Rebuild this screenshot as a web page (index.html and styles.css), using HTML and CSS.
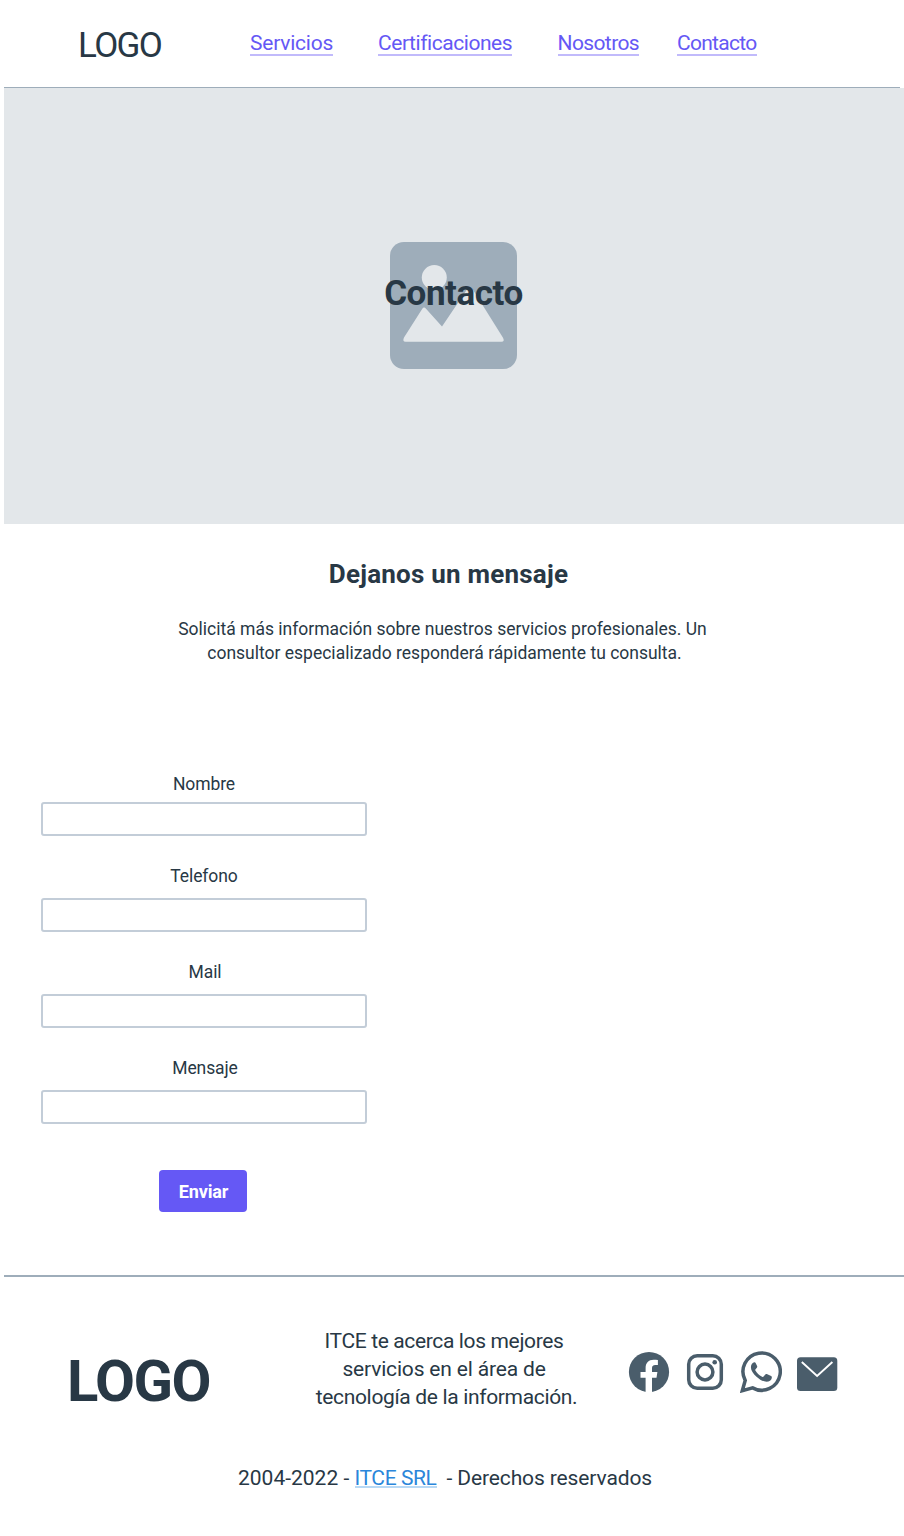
FILE: index.html
```html
<!DOCTYPE html>
<html lang="es">
<head>
<meta charset="utf-8">
<title>Contacto</title>
<link rel="stylesheet" href="styles.css">
</head>
<body>
<header class="header">
  <div class="logo">LOGO</div>
  <nav class="nav">
    <a class="nav-link servicios" href="#">Servicios</a>
    <a class="nav-link certificaciones" href="#">Certificaciones</a>
    <a class="nav-link nosotros" href="#">Nosotros</a>
    <a class="nav-link contacto" href="#">Contacto</a>
  </nav>
</header>
<main>
  <section class="hero">
    <svg class="placeholder" viewBox="0 0 127 127" aria-hidden="true">
      <rect width="127" height="127" rx="14" fill="#9eadba"/>
      <circle cx="44.3" cy="35.5" r="12.5" fill="#e3e7ea"/>
      <path d="M14 95.5 32.3 66.8Q34 64.4 36 66.8L52 84.5 76.8 47.8Q80 43.5 83 47.8L113 95.8Q115 99.7 111.5 99.7H15.5Q12.2 99.7 14 95.5Z" fill="#e3e7ea"/>
    </svg>
    <h1 class="hero-title">Contacto</h1>
  </section>
  <section class="intro">
    <h2 class="intro-title">Dejanos un mensaje</h2>
    <p class="intro-text"><span>Solicitá más información sobre nuestros servicios profesionales. Un</span> <span class="second">consultor especializado responderá rápidamente tu consulta.</span></p>
  </section>
  <form class="form">
    <label class="field first"><span>Nombre</span><input class="input" type="text"></label>
    <label class="field"><span>Telefono</span><input class="input" type="text"></label>
    <label class="field shifted"><span>Mail</span><input class="input" type="text"></label>
    <label class="field shifted"><span>Mensaje</span><input class="input" type="text"></label>
    <button class="submit" type="button">Enviar</button>
  </form>
</main>
<footer class="footer">
  <div class="footer-main">
    <div class="footer-logo">LOGO</div>
    <p class="about"><span class="line-a">ITCE te acerca los mejores</span> <span class="line-b">servicios en el área de</span> <span class="line-c">tecnología de la información.</span></p>
    <div class="social">
      <svg viewBox="-1 -1 42 42"><circle cx="20" cy="20" r="20.1" fill="#4a5d6b"/><path d="M16.6 41V25.7H11.5V20h5.1v-4c0-5.2 3-8.3 8-8.3 1.6 0 3 .15 4.3.4v5h-2.6c-2.4 0-3.3 1.3-3.3 3.1V20h5.4l-.9 5.7H23V41z" fill="#fff"/></svg>
      <svg viewBox="0 0 42 42" fill="none" stroke="#4a5d6b" stroke-width="3.5"><rect x="4.7" y="4.7" width="32.6" height="32.6" rx="8.5"/><circle cx="21" cy="21" r="7.9"/><circle cx="30.7" cy="11.2" r="2.3" fill="#4a5d6b" stroke="none"/></svg>
      <svg viewBox="0 0 42 42"><path d="M2.3 39.7 5.2 29.4A18.65 18.65 0 1 1 12.6 36.9Z" fill="none" stroke="#4a5d6b" stroke-width="3.5"/><path d="M14.3 11.2c-1.6.1-3.4 2.2-3.4 5 0 3.2 2.3 6.5 5.6 9.5 3.5 3.1 6.8 5 10 5 2.7 0 5-1.6 5.3-3.8.1-.9 0-1.4-.7-1.8l-4.3-2c-.6-.3-1.1-.2-1.5.4l-1.7 2.1c-.4.5-.9.5-1.5.2-3.1-1.5-5.3-3.6-6.7-6.2-.3-.6-.2-1 .2-1.4l1.4-1.8c.3-.4.3-.8.1-1.3l-1.6-3.3c-.2-.5-.6-.7-1.2-.6Z" fill="#4a5d6b"/></svg>
      <svg viewBox="0 0 42 42"><rect x="1" y="6.2" width="40.3" height="33.7" rx="3.5" fill="#4a5d6b"/><path d="m5.8 11 15.3 14 15.3-14" fill="none" stroke="#fff" stroke-width="1.9"/></svg>
    </div>
  </div>
  <p class="legal"><span class="years">2004-2022 -</span><a class="company" href="#">ITCE SRL</a><span class="rights">- Derechos reservados</span></p>
</footer>
</body>
</html>
```
FILE: styles.css
```css
* { box-sizing: border-box; }
body { margin: 0; min-height: 1536px; background: #fff; color: #283845; font-family: Roboto, "Liberation Sans", sans-serif; }
h1, h2, p { margin: 0; }

.header { display: flex; height: 88px; margin: 0 4px; border-bottom: 1px solid #9eadba; }
.logo { width: 172px; padding: 25px 0 0 74px; font-size: 35px; line-height: 42px; letter-spacing: -1.6px; }
.nav { display: flex; align-items: flex-start; padding: 32px 0 0 74px; }
.nav-link { height: 24px; border-bottom: 2px solid #c1bafb; color: #6558f5; font-size: 21px; line-height: 22px; text-decoration: none; white-space: nowrap; }
.servicios { width: 83px; letter-spacing: -.22px; }
.certificaciones { width: 134px; margin-left: 45px; letter-spacing: -.45px; }
.nosotros { width: 81.5px; margin-left: 45.5px; letter-spacing: -.6px; }
.contacto { width: 79.5px; margin-left: 38px; letter-spacing: -.72px; }

.hero { display: grid; height: 436px; margin-left: 4px; place-items: center; background: #e3e7ea; }
.placeholder { grid-area: 1 / 1; width: 127px; height: 127px; margin: 0 1px 1px 0; }
.hero-title { grid-area: 1 / 1; z-index: 1; padding: 0 1px 24px 0; font-size: 35px; line-height: 42px; letter-spacing: -.45px; }

.intro { display: flex; width: 897px; flex-direction: column; align-items: center; padding-top: 34px; }
.intro-title { font-size: 26px; line-height: 32px; letter-spacing: .22px; }
.intro-text { margin: 27px 12px 0 0; font-size: 17.5px; line-height: 24px; text-align: center; }
.intro-text span { display: block; }
.intro-text .second { padding-left: 4px; }

.form { display: flex; width: 326px; flex-direction: column; align-items: center; margin: 107px 0 0 41px; }
.field { display: flex; width: 100%; flex-direction: column; gap: 10px; margin-bottom: 28px; font-size: 17.5px; line-height: 24px; text-align: center; letter-spacing: -.1px; }
.field.first { gap: 6px; }
.shifted span { padding-left: 2px; }
.input { width: 100%; height: 34px; border: 2px solid #c3cdd8; border-radius: 3px; background: #fff; font: inherit; }
.submit { width: 88px; height: 42px; margin: 18px 2px 0 0; padding: 1px 0 0 1px; border: 0; border-radius: 4px; background: #6558f5; color: #fff; font: 700 18px Roboto, sans-serif; letter-spacing: -.1px; }

.footer { margin: 63px 0 0 4px; border-top: 2px solid #9eadba; }
.footer-main { display: flex; height: 134px; align-items: flex-start; padding-top: 50px; }
.footer-logo { width: 236px; padding: 20px 0 0 63px; font-size: 58px; font-weight: 700; line-height: 68px; letter-spacing: -1.5px; }
.about { width: 408px; font-size: 21px; line-height: 28px; text-align: center; }
.about span { display: block; }
.line-a { letter-spacing: -.36px; }
.line-b { letter-spacing: -.17px; }
.line-c { padding-left: 5px; letter-spacing: -.34px; }
.social { display: flex; gap: 14px; margin: 24px 0 0 -20px; }
.social svg { width: 42px; height: 42px; }
.legal { display: flex; align-items: flex-start; margin: 54px 0 0 234px; font-size: 21px; line-height: 26px; white-space: nowrap; }
.years { width: 116.5px; }
.company { width: 82px; height: 23px; border-bottom: 2px solid #b8d9f5; color: #2b86da; letter-spacing: -.4px; text-decoration: none; }
.rights { margin-left: 10px; letter-spacing: -.12px; }
```
